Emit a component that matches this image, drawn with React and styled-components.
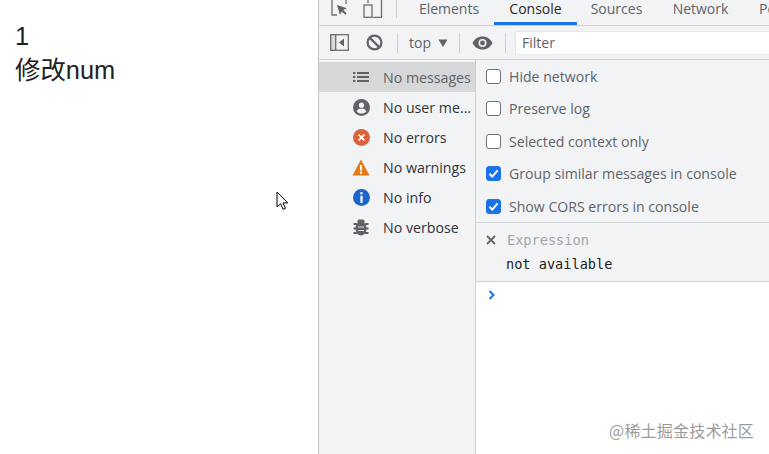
import React from "react";
import styled, { createGlobalStyle } from "styled-components";

const uiFont = `"Open Sans", "Noto Sans", sans-serif`;

const GlobalStyle = createGlobalStyle`
  html, body {
    margin: 0;
    padding: 0;
    background: #fff;
  }
  #root {
    width: 769px;
    height: 454px;
    overflow: hidden;
  }
`;

const Page = styled.div`
  position: relative;
  display: flex;
  width: 769px;
  height: 454px;
  overflow: hidden;
  background: #fff;
`;

const Preview = styled.div`
  width: 318px;
  flex: none;
  box-sizing: border-box;
  padding: 19px 0 0 15px;
  font-family: "Liberation Sans", "Noto Sans CJK SC", sans-serif;
  font-size: 25.4px;
  line-height: 34px;
  color: #222;
`;

const Devtools = styled.div`
  flex: 1;
  min-width: 0;
  display: flex;
  flex-direction: column;
  border-left: 1px solid #c4c6c8;
  font-family: ${uiFont};
  color: #5c6066;
`;

const TabBar = styled.div`
  height: 26px;
  box-sizing: border-box;
  flex: none;
  display: flex;
  align-items: flex-start;
  background: #f2f3f5;
  border-bottom: 1px solid #cdd0d3;
  white-space: nowrap;
  overflow: hidden;
`;

const TabIcons = styled.div`
  display: flex;
  gap: 14px;
  padding-left: 12px;
  svg { display: block; }
`;

const Separator = styled.div`
  width: 1px;
  height: ${(p) => p.$h || 20}px;
  background: #cdd0d3;
  flex: none;
  margin: ${(p) => p.$m || "0"};
`;

const Tab = styled.div`
  box-sizing: border-box;
  width: ${(p) => p.$w}px;
  flex: none;
  padding-left: ${(p) => p.$pad || 0}px;
  text-align: ${(p) => (p.$pad ? "left" : "center")};
  font-size: 14px;
  line-height: 18px;
  color: ${(p) => (p.$active ? "#26282b" : "#5f6368")};
  border-bottom: 3px solid ${(p) => (p.$active ? "#1a73e8" : "transparent")};
  height: 25px;
`;

const Toolbar = styled.div`
  height: 34px;
  flex: none;
  box-sizing: border-box;
  display: flex;
  align-items: center;
  background: #f2f3f5;
  border-bottom: 1px solid #cdd0d3;
  padding-left: 11px;
  white-space: nowrap;
  overflow: hidden;
`;

const ToolIcon = styled.span`
  display: flex;
  flex: none;
  margin: ${(p) => p.$m || "0"};
`;

const Context = styled.span`
  font-size: 14px;
  color: #5f6368;
  margin-left: 11px;
`;

const FilterBox = styled.div`
  flex: 1;
  height: 24px;
  box-sizing: border-box;
  margin-left: 9px;
  padding-left: 6px;
  background: #fff;
  border-top: 1px solid #e6e7e9;
  border-left: 1px solid #e6e7e9;
  border-bottom: 1px solid #e6e7e9;
  font-size: 14px;
  line-height: 22px;
  color: #5f6368;
`;

const Body = styled.div`
  flex: 1;
  display: flex;
  min-height: 0;
`;

const Sidebar = styled.div`
  width: 157px;
  flex: none;
  box-sizing: border-box;
  padding-top: 2px;
  background: #f2f3f5;
  border-right: 1px solid #cdd0d3;
`;

const SideRow = styled.div`
  height: 30px;
  display: flex;
  align-items: center;
  padding-left: 33px;
  background: ${(p) => (p.$selected ? "#d6d7d8" : "transparent")};
  color: ${(p) => (p.$selected ? "#5f6368" : "#303338")};
  font-size: 14.2px;
  white-space: nowrap;
`;

const SideIcon = styled.span`
  width: 18px;
  height: 18px;
  flex: none;
  display: flex;
  align-items: center;
  justify-content: center;
  margin-right: 13px;
`;

const Main = styled.div`
  flex: 1;
  min-width: 0;
  display: flex;
  flex-direction: column;
`;

const Settings = styled.div`
  background: #f2f3f5;
  height: 163px;
  flex: none;
  box-sizing: border-box;
  border-bottom: 1px solid #d4d6d8;
`;

const CheckRow = styled.div`
  height: 32.5px;
  display: flex;
  align-items: center;
  padding-left: 10px;
  font-size: 14.1px;
  color: #5f6368;
  white-space: nowrap;
`;

const Box = styled.span`
  width: 15px;
  height: 15px;
  box-sizing: border-box;
  flex: none;
  margin-right: 8px;
  border-radius: 3px;
  border: 1px solid ${(p) => (p.$on ? "#1a73e8" : "#6f7276")};
  background: ${(p) => (p.$on ? "#1a73e8" : "#fff")};
  display: flex;
  align-items: center;
  justify-content: center;
`;

const Watch = styled.div`
  height: 59px;
  box-sizing: border-box;
  flex: none;
  background: #f2f3f5;
  border-bottom: 1px solid #cdd0d3;
  font-family: "DejaVu Sans Mono", monospace;
  font-size: 13.6px;
`;

const WatchHead = styled.div`
  display: flex;
  align-items: center;
  height: 34px;
  padding: 0 0 1px 10px;
  box-sizing: border-box;
  color: #a3a6a9;
  svg { margin-right: 11px; }
`;

const WatchValue = styled.div`
  padding-left: 30px;
  line-height: 14px;
  color: #202124;
`;

const Prompt = styled.div`
  flex: 1;
  background: #fff;
  padding: 8px 0 0 12px;
`;

const Cursor = styled.svg`
  position: absolute;
  left: 276px;
  top: 191px;
`;

const Watermark = styled.div`
  position: absolute;
  right: 15px;
  top: 420px;
  font-family: "Noto Sans CJK SC", sans-serif;
  font-size: 16px;
  line-height: 20px;
  letter-spacing: 0.2px;
  color: rgba(120, 120, 120, 0.75);
`;

const Check = () => (
  <svg width="11" height="11" viewBox="0 0 11 11">
    <path d="M1.500 5.800 4.300 8.600 9.600 2.400" fill="none" stroke="#fff" strokeWidth="2" />
  </svg>
);

const rows = [
  {
    label: "No messages",
    selected: true,
    icon: (
      <svg width="16" height="12" viewBox="0 0 16 12">
        <g fill="#5f6368">
          <rect x="0" y="1" width="2.400" height="2" />
          <rect x="4" y="1" width="12" height="2" />
          <rect x="0" y="5" width="2.400" height="2" />
          <rect x="4" y="5" width="12" height="2" />
          <rect x="0" y="9" width="2.400" height="2" />
          <rect x="4" y="9" width="12" height="2" />
        </g>
      </svg>
    ),
  },
  {
    label: "No user me...",
    icon: (
      <svg width="17" height="17" viewBox="0 0 17 17">
        <circle cx="8.500" cy="8.500" r="8.500" fill="#5f6368" />
        <circle cx="8.500" cy="6.200" r="2.600" fill="#f2f3f5" />
        <path d="M3.600 12.200c1-1.900 3-2.600 4.900-2.600s3.900.7 4.900 2.600c-1.100 1.400-2.900 2.300-4.900 2.300s-3.800-.9-4.900-2.300z" fill="#f2f3f5" />
      </svg>
    ),
  },
  {
    label: "No errors",
    icon: (
      <svg width="17" height="17" viewBox="0 0 17 17">
        <circle cx="8.500" cy="8.500" r="8.500" fill="#d9633a" />
        <path d="M5.700 5.700l5.600 5.600M11.300 5.700l-5.600 5.600" stroke="#fff" strokeWidth="1.800" />
      </svg>
    ),
  },
  {
    label: "No warnings",
    icon: (
      <svg width="18" height="17" viewBox="0 0 18 17">
        <path d="M9 0.500 17.600 16.500H0.400z" fill="#e37b1c" />
        <rect x="8" y="6" width="2" height="5.500" fill="#fff" />
        <rect x="8" y="12.600" width="2" height="2" fill="#fff" />
      </svg>
    ),
  },
  {
    label: "No info",
    icon: (
      <svg width="17" height="17" viewBox="0 0 17 17">
        <circle cx="8.500" cy="8.500" r="8.500" fill="#1b66c9" />
        <rect x="7.400" y="3.200" width="2.200" height="2.200" fill="#fff" />
        <rect x="7.400" y="6.800" width="2.200" height="7" fill="#fff" />
      </svg>
    ),
  },
  {
    label: "No verbose",
    icon: (
      <svg width="16" height="17" viewBox="0 0 16 17">
        <g fill="#5f6368">
          <ellipse cx="8" cy="9.500" rx="5.500" ry="7" />
          <rect x="4.500" y="0.500" width="7" height="4" rx="1.500" />
          <path d="M0.500 4h3.500v2H0.500zM12 4h3.500v2H12zM0.500 8.500h3.500v2H0.500zM12 8.500h3.500v2H12zM0.500 13h3.500v2H0.500zM12 13h3.500v2H12z" />
        </g>
        <path d="M5 8h6M5 11.500h6" stroke="#f2f3f5" strokeWidth="0.900" />
      </svg>
    ),
  },
];

const checks = [
  { label: "Hide network" },
  { label: "Preserve log" },
  { label: "Selected context only" },
  { label: "Group similar messages in console", on: true },
  { label: "Show CORS errors in console", on: true },
];

export default function App() {
  return (
    <Page>
      <GlobalStyle />
      <Preview>
        <div>1</div>
        <div>修改num</div>
      </Preview>
      <Devtools>
        <TabBar>
          <TabIcons>
            <svg width="18" height="18" viewBox="0 0 18 18">
              <path d="M6 15H1V0M15 0V4" fill="none" stroke="#6b6f74" strokeWidth="1.300" />
              <path d="M6 5l3 10 1.800-3.600 3.500 3.400 1.400-1.400-3.400-3.400 3.600-1.800z" fill="#5f6368" />
            </svg>
            <svg width="20" height="18" viewBox="0 0 20 18">
              <path d="M5 3V0M18.500 0V17.300H10" fill="none" stroke="#6b6f74" strokeWidth="1.300" />
              <rect x="1" y="5" width="8" height="12.300" fill="none" stroke="#6b6f74" strokeWidth="1.300" />
            </svg>
          </TabIcons>
          <Separator $h={18} $m="0 7px 0 13px" />
          <Tab $w="90">Elements</Tab>
          <Tab $w="83" $active>Console</Tab>
          <Tab $w="79">Sources</Tab>
          <Tab $w="89">Network</Tab>
          <Tab $w="90" $pad="14">Performance</Tab>
        </TabBar>
        <Toolbar>
          <ToolIcon>
            <svg width="19" height="17" viewBox="0 0 19 17">
              <rect x="0.700" y="0.700" width="17.600" height="15.600" fill="none" stroke="#6b6f74" strokeWidth="1.300" />
              <rect x="0.700" y="0.700" width="5" height="15.600" fill="#d8dadc" stroke="#6b6f74" strokeWidth="1.300" />
              <path d="M14 4.500v8l-5-4z" fill="#5f6368" />
            </svg>
          </ToolIcon>
          <ToolIcon $m="0 0 0 17px">
            <svg width="17" height="17" viewBox="0 0 17 17">
              <circle cx="8.500" cy="8.500" r="6.900" fill="none" stroke="#5f6368" strokeWidth="2.200" />
              <path d="M3.600 3.600l9.800 9.800" stroke="#5f6368" strokeWidth="2.200" />
            </svg>
          </ToolIcon>
          <Separator $m="0 0 0 14px" />
          <Context>top</Context>
          <ToolIcon $m="0 0 0 7px">
            <svg width="10" height="8" viewBox="0 0 10 8">
              <path d="M0.500 0.500h9L5 8z" fill="#5f6368" />
            </svg>
          </ToolIcon>
          <Separator $m="0 0 0 11px" />
          <ToolIcon $m="0 0 0 12px">
            <svg width="21" height="14" viewBox="0 0 21 14">
              <path d="M10.500 0.500C6 0.500 2.200 3.200 0.500 7c1.700 3.800 5.500 6.500 10 6.500s8.300-2.700 10-6.500c-1.700-3.800-5.500-6.500-10-6.500z" fill="#5f6368" />
              <circle cx="10.500" cy="7" r="4" fill="#f2f3f5" />
              <circle cx="10.500" cy="7" r="2.400" fill="#5f6368" />
            </svg>
          </ToolIcon>
          <Separator $m="0 0 0 12px" />
          <FilterBox>Filter</FilterBox>
        </Toolbar>
        <Body>
          <Sidebar>
            {rows.map((r) => (
              <SideRow key={r.label} $selected={r.selected}>
                <SideIcon>{r.icon}</SideIcon>
                {r.label}
              </SideRow>
            ))}
          </Sidebar>
          <Main>
            <Settings>
              {checks.map((c) => (
                <CheckRow key={c.label}>
                  <Box $on={c.on}>{c.on && <Check />}</Box>
                  {c.label}
                </CheckRow>
              ))}
            </Settings>
            <Watch>
              <WatchHead>
                <svg width="10" height="10" viewBox="0 0 10 10">
                  <path d="M1 1l8 8M9 1l-8 8" stroke="#5f6368" strokeWidth="1.800" />
                </svg>
                Expression
              </WatchHead>
              <WatchValue>not available</WatchValue>
            </Watch>
            <Prompt>
              <svg width="8" height="10" viewBox="0 0 8 10" style={{ display: "block" }}>
                <path d="M1.500 1l4 4-4 4" fill="none" stroke="#1a73e8" strokeWidth="2" />
              </svg>
            </Prompt>
          </Main>
        </Body>
      </Devtools>
      <Cursor width="13" height="20" viewBox="0 0 13 20">
        <path d="M1 1v15l3.600-3.300 2.500 5.600 2.400-1-2.500-5.400h4.800z" fill="#fff" stroke="#000" strokeWidth="1" />
      </Cursor>
      <Watermark>@稀土掘金技术社区</Watermark>
    </Page>
  );
}
